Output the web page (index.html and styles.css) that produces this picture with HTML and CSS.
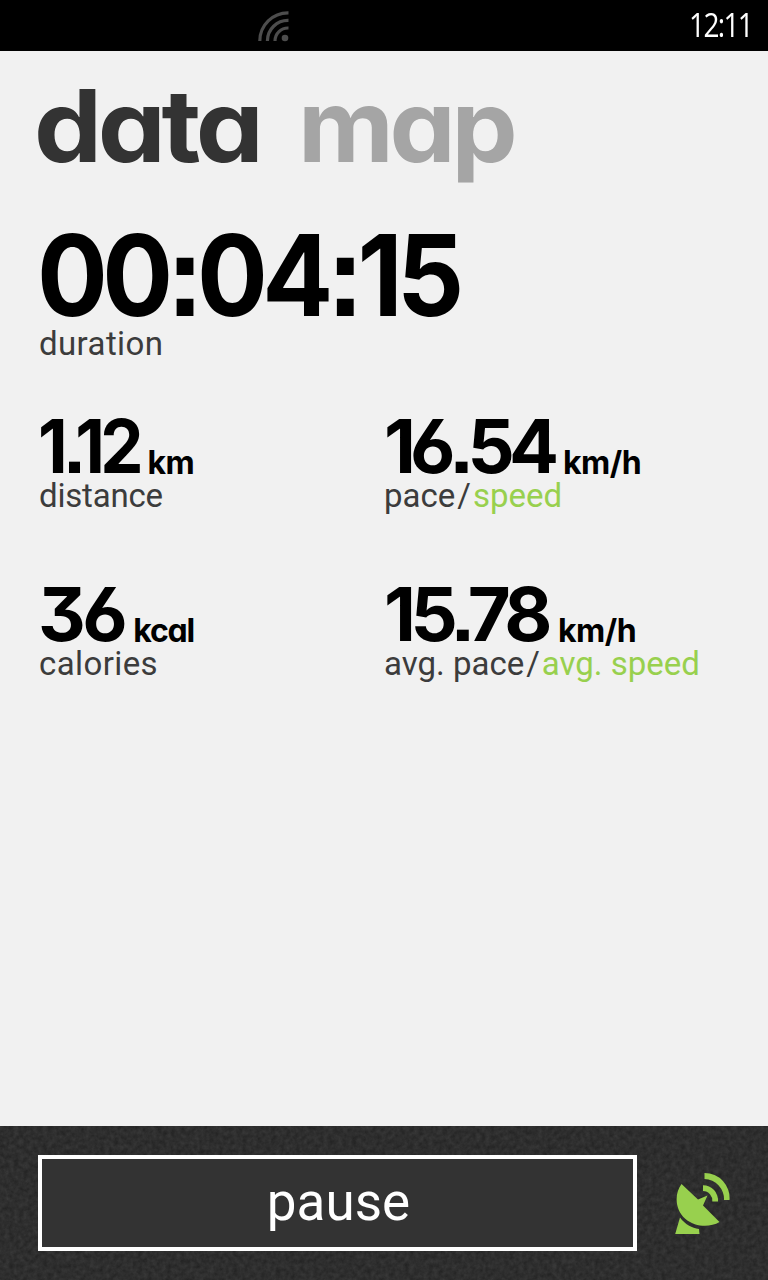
FILE: index.html
```html
<!DOCTYPE html>
<html lang="en">
<head>
    <meta charset="UTF-8">
    <meta name="viewport" content="width=device-width, initial-scale=1.0">
    <title>Workout</title>
    <link rel="stylesheet" href="styles.css">
</head>
<body>
    <div class="statusbar">
        <svg class="signal" width="32" height="32" viewBox="0 0 32 32" fill="none" stroke="#4d4d4d" stroke-width="3.2">
            <path d="M1.8 30 A28.2 28.2 0 0 1 30.500 1.8"/>
            <path d="M9.4 30 A20.6 20.6 0 0 1 30.500 9.4"/>
            <path d="M17 30 A13 13 0 0 1 30.500 17"/>
            <circle cx="27" cy="27" r="3.3" fill="#4d4d4d" stroke="none"/>
        </svg>
        <span class="clock">12:11</span>
    </div>
    <div class="content">
        <div class="tabs">
            <span class="tab active">data</span>
            <span class="tab map">map</span>
        </div>
        <div class="duration">
            <div class="time">00:04:15</div>
            <div class="label">duration</div>
        </div>
        <div class="metrics">
            <div class="metric distance">
                <div class="value"><span class="number">1.12</span><span class="unit">km</span></div>
                <div class="label">distance</div>
            </div>
            <div class="metric speed">
                <div class="value"><span class="number">16.54</span><span class="unit">km/h</span></div>
                <div class="label">pace<span class="slash">/</span><span class="green">speed</span></div>
            </div>
            <div class="metric calories">
                <div class="value"><span class="number">36</span><span class="unit">kcal</span></div>
                <div class="label">calories</div>
            </div>
            <div class="metric average">
                <div class="value"><span class="number">15.78</span><span class="unit">km/h</span></div>
                <div class="label">avg. pace<span class="slash">/</span><span class="green">avg. speed</span></div>
            </div>
        </div>
    </div>
    <div class="footer">
        <svg class="texture" width="768" height="154">
            <filter id="grain" x="0" y="0" width="100%" height="100%" color-interpolation-filters="sRGB">
                <feTurbulence type="fractalNoise" baseFrequency="0.21" numOctaves="3" seed="4"/>
                <feColorMatrix values="0.11 0 0 0 0.125  0.11 0 0 0 0.125  0.11 0 0 0 0.125  0 0 0 0 1"/>
            </filter>
            <rect width="768" height="154" filter="url(#grain)"/>
        </svg>
        <button class="pause">pause</button>
        <svg class="gps" width="56" height="62" viewBox="0 0 56 62" fill="#98d04e">
            <path d="M6.5 11 L23 26.5 L32.500 22.500 L28 32.500 L44.5 49 C35 54.500 21 54.500 10.500 46 C0 37 -1 21 6.500 11 Z"/>
            <path d="M5 44.500 C10 51.500 17 55 24 56 L24.500 61 L0.200 61 Z"/>
            <path d="M29.5 0 A25 25 0 0 1 54.500 27 L49 27 A20 20 0 0 0 29.500 6 Z"/>
            <path d="M28 12.300 A15 15 0 0 1 43 28.500 L37.300 28.500 A9.500 9.500 0 0 0 28 18 Z"/>
        </svg>
    </div>
</body>
</html>
```
FILE: styles.css
```css
body {
    margin: 0;
    width: 768px;
    height: 1280px;
    display: flex;
    flex-direction: column;
    background: #f1f1f1;
    color: #000;
    overflow: hidden;
}
.statusbar {
    height: 51px;
    background: #000;
    display: flex;
    justify-content: space-between;
    align-items: center;
    padding: 0 16px 0 258px;
}
.signal {
    margin-top: 3px;
}
.clock {
    font-family: "Open Sans", sans-serif;
    font-size: 33px;
    font-weight: 400;
    line-height: 48px;
    letter-spacing: -2px;
    margin-bottom: 2px;
    color: #fff;
    transform: scaleX(0.85);
    transform-origin: right;
}
.content {
    flex: 1;
    padding: 25px 38px 0;
}
.tabs,
.time,
.value {
    font-family: Inter, sans-serif;
    font-weight: 700;
    font-feature-settings: "cv11", "cv09", "cv03", "ss07";
    white-space: nowrap;
}
.tabs {
    display: flex;
    font-size: 100px;
    line-height: 100px;
}
.tab {
    letter-spacing: -4px;
    transform-origin: left;
}
.active {
    color: #333;
    margin-left: -4px;
    transform: scaleX(1.08);
}
.map {
    color: #a5a5a5;
    margin-left: 55px;
    transform: scaleX(1.05);
}
.duration {
    margin-top: 47px;
}
.time {
    font-size: 113px;
    line-height: 104px;
    letter-spacing: -6px;
    margin-left: -1px;
    transform: scaleX(0.93);
    transform-origin: left;
}
.label {
    font-family: Roboto, sans-serif;
    font-size: 33px;
    font-weight: 400;
    line-height: 34px;
    letter-spacing: 0.4px;
    padding-left: 1px;
    color: #3c3c3c;
    white-space: nowrap;
}
.slash {
    margin: 0 2px;
}
.green {
    color: #98d04e;
}
.metrics {
    display: grid;
    grid-template-columns: 346px 346px;
    row-gap: 68px;
    margin-top: 52px;
}
.value {
    display: flex;
    align-items: baseline;
    height: 66px;
    line-height: 66px;
}
.number {
    font-size: 74px;
}
.unit {
    position: relative;
    top: 1px;
    font-size: 32px;
    line-height: 32px;
    letter-spacing: -0.5px;
}
.distance .number {
    letter-spacing: -5px;
    margin-right: 1px;
    transform: scaleX(0.93);
    transform-origin: left;
}
.speed .number {
    letter-spacing: -6px;
    margin-right: 10px;
}
.calories .number {
    letter-spacing: -3.5px;
    margin-right: 9px;
}
.average .number {
    letter-spacing: -5.5px;
    margin-right: 11px;
}
.calories .unit {
    letter-spacing: -1.2px;
}
.distance .label {
    letter-spacing: -0.2px;
}
.speed .label,
.average .label {
    letter-spacing: 0;
    padding-left: 0;
}
.footer {
    position: relative;
    height: 154px;
    background: #2d2d2d;
    display: flex;
    align-items: center;
    padding: 0 38px;
}
.texture {
    position: absolute;
    top: 0;
    left: 0;
}
.pause {
    position: relative;
    flex-shrink: 0;
    width: 599px;
    height: 96px;
    padding: 0 0 2px 2px;
    border: 4px solid #fff;
    background: #333;
    color: #fff;
    font-family: Roboto, sans-serif;
    font-size: 53px;
    font-weight: 400;
    letter-spacing: 0;
}
.gps {
    position: relative;
    flex-shrink: 0;
    margin: 2px 0 0 38px;
}
```
